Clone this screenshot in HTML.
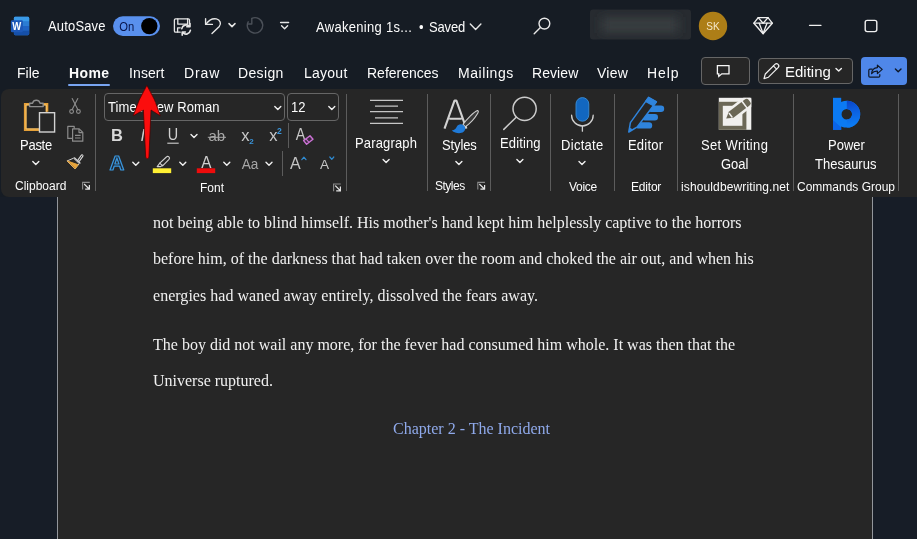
<!DOCTYPE html>
<html lang="en">
<head>
<meta charset="utf-8">
<title>Awakening 1st Draft - Word</title>
<style>
html,body{margin:0;padding:0;background:#161c24;}
body{width:917px;height:539px;overflow:hidden;position:relative;font-family:"Liberation Sans",sans-serif;color:#fff;}
#app{position:absolute;left:0;top:0;width:917px;height:539px;overflow:hidden;background:#161c24;}
.t{position:absolute;white-space:nowrap;line-height:1;color:#fcfcfc;will-change:transform;}
.ui13{font-size:13px;transform:scaleY(1.09);transform-origin:0 84.65%;}
.ui14{font-size:14px;transform:scaleY(1.09);transform-origin:0 84.65%;}
.ui12{font-size:12px;transform:scaleY(1.09);transform-origin:0 84.65%;}
#ribbon{position:absolute;left:1px;top:89px;width:930px;height:108px;background:#262626;border-radius:8px;}
#docbg{position:absolute;left:0;top:197px;width:917px;height:343px;background:#171d27;}
#page{position:absolute;left:57px;top:190px;width:814px;height:360px;background:#262626;border-left:1px solid #93969b;border-right:1px solid #93969b;}
.sep{position:absolute;width:1px;background:#5c5c5c;}
.doc{font-family:"Liberation Serif",serif;font-size:16px;color:#f0f0f0;}
.box{position:absolute;box-sizing:border-box;border:1px solid #666;border-radius:4px;background:#262626;}
svg{position:absolute;left:0;top:0;overflow:visible;}
</style>
</head>
<body>
<div id="app">

<!-- ===== document area ===== -->
<div id="docbg"></div>
<div id="page"></div>

<!-- ===== ribbon ===== -->
<div id="ribbon"></div>

<!-- ===== title bar text ===== -->
<div class="t ui13" style="left:48px;top:20px;letter-spacing:0.16px;">AutoSave</div>
<div class="t ui13" style="left:316px;top:21px;letter-spacing:0.3px;">Awakening 1s...</div>
<div class="t ui13" style="left:418.5px;top:21px;">•</div>
<div class="t ui13" style="left:429px;top:21px;letter-spacing:-0.15px;">Saved</div>

<!-- ===== tabs ===== -->
<div class="t ui14" style="left:17px;top:66px;">File</div>
<div class="t ui14" style="left:69px;top:66px;font-weight:bold;letter-spacing:0.375px;">Home</div>
<div class="t ui14" style="left:129px;top:66px;letter-spacing:0.1px;">Insert</div>
<div class="t ui14" style="left:184px;top:66px;letter-spacing:0.9px;">Draw</div>
<div class="t ui14" style="left:238px;top:66px;letter-spacing:0.35px;">Design</div>
<div class="t ui14" style="left:304px;top:66px;letter-spacing:0.25px;">Layout</div>
<div class="t ui14" style="left:367px;top:66px;">References</div>
<div class="t ui14" style="left:458px;top:66px;letter-spacing:0.56px;">Mailings</div>
<div class="t ui14" style="left:532px;top:66px;letter-spacing:0.07px;">Review</div>
<div class="t ui14" style="left:597px;top:66px;letter-spacing:0.25px;">View</div>
<div class="t ui14" style="left:647px;top:66px;letter-spacing:0.9px;">Help</div>
<div style="position:absolute;left:68px;top:84px;width:42px;height:2.3px;background:#78a5f2;border-radius:1.2px;"></div>

<!-- right-side buttons -->
<div class="box" style="left:701px;top:57px;width:49px;height:28px;"></div>
<div class="box" style="left:758px;top:58px;width:95px;height:26px;"></div>
<div style="position:absolute;left:861px;top:57px;width:46px;height:28px;background:#4f87e9;border-radius:4px;"></div>
<div class="t" style="left:784.5px;top:64px;font-size:15px;transform:scaleY(1.02);transform-origin:0 84.65%;">Editing</div>

<!-- ===== ribbon contents ===== -->
<div class="sep" style="left:95px;top:94px;height:97px;"></div>
<div class="sep" style="left:346px;top:94px;height:97px;"></div>
<div class="sep" style="left:427px;top:94px;height:97px;"></div>
<div class="sep" style="left:490px;top:94px;height:97px;"></div>
<div class="sep" style="left:550px;top:94px;height:97px;"></div>
<div class="sep" style="left:614px;top:94px;height:97px;"></div>
<div class="sep" style="left:677px;top:94px;height:97px;"></div>
<div class="sep" style="left:793px;top:94px;height:97px;"></div>
<div class="sep" style="left:898px;top:94px;height:97px;"></div>
<div class="sep" style="left:288px;top:123px;height:25px;"></div>
<div class="sep" style="left:282px;top:151px;height:25px;"></div>

<div class="t ui13" style="left:20px;top:139px;letter-spacing:-0.26px;">Paste</div>
<div class="t ui12" style="left:15px;top:180px;">Clipboard</div>

<div class="box" style="left:104px;top:93px;width:181px;height:28px;"></div>
<div class="box" style="left:287px;top:93px;width:52px;height:28px;"></div>
<div class="t ui13" style="left:108px;top:101px;letter-spacing:0.11px;">Times New Roman</div>
<div class="t ui13" style="left:291px;top:101px;">12</div>
<div class="t ui12" style="left:200px;top:182px;">Font</div>

<div class="t ui13" style="left:355px;top:137px;letter-spacing:0.15px;">Paragraph</div>
<div class="t ui13" style="left:442px;top:139px;letter-spacing:-0.13px;">Styles</div>
<div class="t ui12" style="left:435px;top:180px;letter-spacing:-0.5px;">Styles</div>
<div class="t ui13" style="left:500px;top:137px;letter-spacing:0.14px;">Editing</div>
<div class="t ui13" style="left:561px;top:139px;letter-spacing:0.3px;">Dictate</div>
<div class="t ui12" style="left:569px;top:181px;letter-spacing:-0.3px;">Voice</div>
<div class="t ui13" style="left:628px;top:139px;letter-spacing:0.2px;">Editor</div>
<div class="t ui12" style="left:631px;top:181px;letter-spacing:-0.2px;">Editor</div>
<div class="t ui13" style="left:701px;top:139px;letter-spacing:0.36px;">Set Writing</div>
<div class="t ui13" style="left:721px;top:158px;">Goal</div>
<div class="t ui12" style="left:681px;top:181px;letter-spacing:0.125px;">ishouldbewriting.net</div>
<div class="t ui13" style="left:828px;top:139px;">Power</div>
<div class="t ui13" style="left:815px;top:158px;">Thesaurus</div>
<div class="t ui12" style="left:797px;top:181px;">Commands Group</div>

<!-- ===== document text ===== -->
<div class="t doc" style="left:153px;top:215px;">not being able to blind himself. His mother's hand kept him helplessly captive to the horrors</div>
<div class="t doc" style="left:153px;top:251px;">before him, of the darkness that had taken over the room and choked the air out, and when his</div>
<div class="t doc" style="left:153px;top:288px;letter-spacing:0.03px;">energies had waned away entirely, dissolved the fears away.</div>
<div class="t doc" style="left:153px;top:337px;">The boy did not wail any more, for the fever had consumed him whole. It was then that the</div>
<div class="t doc" style="left:153px;top:373px;">Universe ruptured.</div>
<div class="t doc" style="left:393px;top:421px;color:#8fa9ea;">Chapter 2 - The Incident</div>

<!-- ===== icons ===== -->
<svg id="icons" width="917" height="539" viewBox="0 0 917 539">

<!-- Word logo -->
<g>
  <rect x="13.9" y="16.8" width="15.3" height="18.4" rx="1.4" fill="#2b7cd3"/>
  <path d="M13.9 18.2 a1.4 1.4 0 0 1 1.4 -1.4 h12.5 a1.4 1.4 0 0 1 1.4 1.4 v3.2 h-15.3z" fill="#3a9ae8"/>
  <rect x="13.9" y="21.4" width="15.3" height="4.6" fill="#2b7cd3"/>
  <rect x="13.9" y="26" width="15.3" height="4.6" fill="#1f63c4"/>
  <path d="M13.9 30.6 h15.3 v3.2 a1.4 1.4 0 0 1 -1.4 1.4 h-12.5 a1.4 1.4 0 0 1 -1.4 -1.4z" fill="#154fa8"/>
  <rect x="10.9" y="20.2" width="12" height="12" rx="1.3" fill="#1d58b8"/>
  <text x="16.8" y="30" font-family="Liberation Sans, sans-serif" font-size="11.4" font-weight="bold" fill="#fff" text-anchor="middle" textLength="9" lengthAdjust="spacingAndGlyphs">W</text>
</g>
<!-- AutoSave toggle -->
<rect x="113" y="16.3" width="47" height="19.6" rx="9.8" fill="#5990ee"/>
<circle cx="149.3" cy="26.1" r="8.2" fill="#000"/>
<text x="119.3" y="31" font-family="Liberation Sans, sans-serif" font-size="12.6" fill="#07144a" textLength="15" lengthAdjust="spacingAndGlyphs">On</text>
<!-- Save (sync) icon -->
<g fill="none" stroke="#e6e6e6" stroke-width="1.3" stroke-linecap="round" stroke-linejoin="round">
  <path d="M180.2 32.2 h-4.6 a1.2 1.2 0 0 1 -1.2 -1.2 v-11 a1.2 1.2 0 0 1 1.2 -1.2 h12.6 a1.3 1.3 0 0 1 1.3 1.3 v4"/>
  <path d="M177.8 19 v5.2 h9.8 v-5.2"/>
  <path d="M177.6 32 v-4.2 h2.6"/>
  <g stroke-width="1.6">
  <path d="M181.8 28.6 a4.4 4.4 0 0 1 7.6 -2.2 M190 23.6 v3.2 h-3.2"/>
  <path d="M190.4 30.4 a4.4 4.4 0 0 1 -7.6 2.2 M182.2 35.2 v-3.2 h3.2"/>
  </g>
</g>
<!-- Undo -->
<g fill="none" stroke="#e6e6e6" stroke-width="1.4" stroke-linecap="round" stroke-linejoin="round">
  <path d="M205.6 18.8 v5.6 h6.8"/>
  <path d="M206 24.2 C 208.6 20.4, 212.6 18.2, 216.4 18.9 C 220.2 19.7, 221.6 23.8, 219.3 26.4 L 212 33.6"/>
  <path d="M229 23.6 l3 3 l3 -3" stroke-width="1.5"/>
</g>
<!-- Redo (disabled) -->
<g fill="none" stroke="#4b5058" stroke-width="1.4" stroke-linecap="round" stroke-linejoin="round">
  <path d="M251.8 18.4 a7.7 7.7 0 1 1 -3.6 3.4"/>
  <path d="M251.8 18.6 v5.4 h-3.6"/>
</g>
<!-- Customize QAT -->
<g fill="none" stroke="#e6e6e6" stroke-width="1.4" stroke-linecap="round" stroke-linejoin="round">
  <path d="M280.6 22.5 h8"/>
  <path d="M281.6 25.8 l3 3 l3 -3"/>
</g>
<!-- Saved chevron -->
<path d="M470.3 24 l5.3 5.6 l5.3 -5.6" fill="none" stroke="#e6e6e6" stroke-width="1.4" stroke-linecap="round" stroke-linejoin="round"/>
<!-- Search -->
<g fill="none" stroke="#e6e6e6" stroke-width="1.4" stroke-linecap="round">
  <circle cx="544.4" cy="23.6" r="5.4"/>
  <path d="M540.4 27.6 l-6.2 6.2"/>
</g>
<!-- blurred account name -->
<defs>
  <filter id="blurf" x="-40%" y="-150%" width="180%" height="400%"><feGaussianBlur stdDeviation="5 4"/></filter>
  <clipPath id="blurclip"><rect x="590" y="9.5" width="101" height="30" rx="3"/></clipPath>
</defs>
<rect x="590" y="9.5" width="101" height="30" rx="3" fill="#272b30"/>
<g clip-path="url(#blurclip)"><rect x="602" y="17" width="76" height="16" fill="#383c41" filter="url(#blurf)"/></g>
<!-- Avatar -->
<circle cx="713" cy="26" r="14.2" fill="#ad7e17"/>
<text x="713" y="30" font-family="Liberation Sans, sans-serif" font-size="11.5" fill="#f4e6c8" text-anchor="middle" textLength="13.4" lengthAdjust="spacingAndGlyphs">SK</text>
<!-- Diamond -->
<g fill="none" stroke="#f0f0f0" stroke-width="1.3" stroke-linejoin="round" stroke-linecap="round">
  <path d="M758.2 17.6 h9.8 l4.3 5.6 l-9.2 10.6 l-9.2 -10.6z"/>
  <path d="M753.9 23.2 h18.4"/>
  <path d="M758.2 17.6 l4.9 5.6 l4.9 -5.6"/>
  <path d="M759.2 23.2 l3.9 10.4 l3.9 -10.4"/>
</g>
<!-- Window buttons -->
<path d="M809.5 25.3 h11.5" stroke="#f0f0f0" stroke-width="1.3" stroke-linecap="round" fill="none"/>
<rect x="865.2" y="20.4" width="11.6" height="11.2" rx="2" fill="none" stroke="#f0f0f0" stroke-width="1.4"/>

<!-- Comment icon -->
<path d="M717.4 65.6 h11.6 v8.2 h-7.2 l-3 2.6 v-2.6 h-1.4z" fill="none" stroke="#f6f6f6" stroke-width="1.3" stroke-linejoin="miter"/>
<!-- Editing pencil -->
<g fill="none" stroke="#f0f0f0" stroke-width="1.2" stroke-linejoin="round" stroke-linecap="round">
  <path d="M764 78.6 l1.3 -4.6 l9.6 -9.6 a2.2 2.2 0 0 1 3.2 3.2 l-9.6 9.6z"/>
  <path d="M773.4 65.9 l3.2 3.2"/>
</g>
<path d="M836 68.4 l2.7 2.7 l2.7 -2.7" fill="none" stroke="#f0f0f0" stroke-width="1.4" stroke-linecap="round" stroke-linejoin="round"/>
<!-- Share icon -->
<g fill="none" stroke="#0e1726" stroke-width="1.2" stroke-linejoin="round" stroke-linecap="round">
  <path d="M872.2 69.2 h-2.2 a1.2 1.2 0 0 0 -1.2 1.2 v5.6 a1.2 1.2 0 0 0 1.2 1.2 h8.6 a1.2 1.2 0 0 0 1.2 -1.2 v-1.4"/>
  <path d="M877.4 65.2 l4.8 4.2 l-4.8 4.2 v-2.5 c-2.6 -0.2 -4.4 0.6 -5.8 2.6 c0.2 -3.6 2.2 -5.8 5.8 -6.1z"/>
</g>
<path d="M895.4 68.9 l2.8 2.8 l2.8 -2.8" fill="none" stroke="#0e1726" stroke-width="1.4" stroke-linecap="round" stroke-linejoin="round"/>

<!-- Paste icon -->
<g fill="none" stroke-linejoin="miter">
  <path d="M29.4 104.2 h-4.2 v25.5 h14" stroke="#e5a038" stroke-width="2.6"/>
  <path d="M43.4 104.2 h3.6 v7.6" stroke="#e5a038" stroke-width="2.6"/>
  <path d="M29.4 104.9 h-3.4 v24 h13.2" stroke="#f7c873" stroke-width="0.9"/>
  <path d="M43.4 104.9 h2.9 v6.9" stroke="#f7c873" stroke-width="0.9"/>
  <path d="M29.6 106.6 v-3.4 h3 a3.8 3.8 0 0 1 7.4 0 h3.2 v3.4z" stroke="#8e8e8e" stroke-width="1.4" stroke-linejoin="round"/>
  <rect x="39.5" y="112.7" width="15.1" height="19.3" fill="#262626" stroke="#d2d2d2" stroke-width="1.4"/>
</g>
<path d="M32.8 161.6 l3 3 l3 -3" fill="none" stroke="#f0f0f0" stroke-width="1.4" stroke-linecap="round" stroke-linejoin="round"/>
<!-- Cut -->
<g fill="none" stroke="#8c8c8c" stroke-width="1.1" stroke-linecap="round">
  <path d="M72.2 98.6 l5.6 11"/>
  <path d="M77.8 98.6 l-5.6 11"/>
  <circle cx="71.6" cy="111.5" r="1.9"/>
  <circle cx="78.4" cy="111.5" r="1.9"/>
</g>
<!-- Copy -->
<g fill="none" stroke="#8c8c8c" stroke-width="1.2" stroke-linejoin="round">
  <path d="M72.4 138.4 h-4.6 v-12 h6.4 v2"/>
  <path d="M72.6 128.8 h6.6 l3.6 3.6 v8.8 h-10.2z"/>
  <path d="M79 129 v3.6 h3.6"/>
  <path d="M75 135.4 h5.6 M75 138 h5.6"/>
</g>
<!-- Format painter -->
<g stroke-linejoin="round" stroke-linecap="round">
  <path d="M67.4 160.8 l6.2 -2.6 l5.6 5.4 l-4 5z" fill="#262626" stroke="#d4d4d4" stroke-width="1"/>
  <path d="M67.6 161 l10.6 3.8 l-3 3.8z" fill="#e9a63c" stroke="#e9a63c" stroke-width="0.9"/>
  <path d="M78.8 160.4 l3.2 -4.6" fill="none" stroke="#d4d4d4" stroke-width="3"/>
  <path d="M78.8 160.4 l3.2 -4.6" fill="none" stroke="#262626" stroke-width="0.9"/>
  <path d="M74.4 157.8 l5.6 5.2" fill="none" stroke="#d4d4d4" stroke-width="1.2"/>
</g>
<!-- dialog launchers -->
<g fill="none" stroke="#8c8c8c" stroke-width="1.1" stroke-linecap="square">
  <path d="M82.6 189 v-6.6 h6.6"/>
  <path d="M333.6 190.6 v-6.6 h6.6"/>
  <path d="M477.8 189 v-6.6 h6.6"/>
</g>
<g fill="none" stroke="#e4e4e4" stroke-width="1.2" stroke-linecap="square">
  <path d="M84.6 184.4 l4.6 4.6 M89.4 185.6 v3.6 h-3.6"/>
  <path d="M335.6 186 l4.6 4.6 M340.4 187.2 v3.6 h-3.6"/>
  <path d="M479.8 184.4 l4.6 4.6 M484.6 185.6 v3.6 h-3.6"/>
</g>

<!-- Font group: chevrons in combo boxes -->
<g fill="none" stroke="#f0f0f0" stroke-width="1.4" stroke-linecap="round" stroke-linejoin="round">
  <path d="M274.8 106.4 l3 3 l3 -3"/>
  <path d="M328.8 106.4 l3 3 l3 -3"/>
  <path d="M191 134.4 l3 3 l3 -3"/>
  <path d="M132.8 162.2 l3 3 l3 -3"/>
  <path d="M179.8 162.2 l3 3 l3 -3"/>
  <path d="M223.8 162.2 l3 3 l3 -3"/>
  <path d="M266 162.2 l3 3 l3 -3"/>
</g>
<g font-family="Liberation Sans, sans-serif">
  <text x="111" y="141.2" font-size="16.5" font-weight="bold" fill="#d8d8d8">B</text>
  <text x="140.5" y="141" font-size="16" font-style="italic" fill="#d0d0d0">I</text>
  <text x="167.8" y="140.3" font-size="16.6" fill="#d0d0d0" textLength="10.4" lengthAdjust="spacingAndGlyphs">U</text>
  <path d="M167.3 143.2 h11.4" stroke="#d0d0d0" stroke-width="1.1"/>
  <text x="208.6" y="141.2" font-size="15" fill="#a8a8a8" letter-spacing="-0.3">ab</text>
  <path d="M207.8 137.3 h18.2" stroke="#a8a8a8" stroke-width="1"/>
  <text x="241.2" y="141" font-size="16.5" fill="#c8c8c8">x</text>
  <text x="249.2" y="144" font-size="8" font-weight="bold" fill="#3a96dd">2</text>
  <text x="269.2" y="141" font-size="16.5" fill="#c8c8c8">x</text>
  <text x="277" y="134.2" font-size="8.6" font-weight="bold" fill="#3a96dd">2</text>
  <text x="295.8" y="140.3" font-size="16.4" fill="#c8c8c8" textLength="9.6" lengthAdjust="spacingAndGlyphs">A</text>
  <text x="241.8" y="168.5" font-size="14" fill="#a6a6a6" textLength="16.6" lengthAdjust="spacingAndGlyphs">Aa</text>
  <text x="290" y="169" font-size="16" fill="#c4c4c4">A</text>
  <text x="320" y="169.3" font-size="13.6" fill="#c4c4c4">A</text>
  <text x="201.2" y="167.8" font-size="16.4" fill="#d0d0d0" textLength="10.2" lengthAdjust="spacingAndGlyphs">A</text>
</g>
<!-- clear formatting eraser -->
<path d="M303.6 140.6 L310 135.7 L313 139.2 L306.6 144.3z" fill="#3a2a3e" stroke="#cb72d4" stroke-width="1.4" stroke-linejoin="round"/>
<path d="M306 138.8 l3 3.6" stroke="#cb72d4" stroke-width="1.1"/>
<!-- grow / shrink carets -->
<path d="M301.8 159.7 l2.1 -2.6 l2.1 2.6" fill="none" stroke="#2f8ad0" stroke-width="1.2" stroke-linecap="round" stroke-linejoin="round"/>
<path d="M329.8 157 l2 2.4 l2 -2.4" fill="none" stroke="#2f8ad0" stroke-width="1.2" stroke-linecap="round" stroke-linejoin="round"/>
<!-- Text effects A -->
<text x="109.6" y="170.4" font-family="Liberation Sans, sans-serif" font-size="20" font-weight="bold" fill="#1d2a38" stroke="#3a96dd" stroke-width="1.2" stroke-linejoin="round" textLength="14.8" lengthAdjust="spacingAndGlyphs">A</text>
<!-- Highlighter -->
<rect x="152.8" y="168.3" width="18.4" height="4.8" fill="#fff033"/>
<g fill="none" stroke="#d0d0d0" stroke-width="1.1" stroke-linejoin="round" stroke-linecap="round">
  <path d="M159.8 163.2 l6.6 -6.2 a1.6 1.6 0 0 1 2.6 2.4 l-6.4 6.4z"/>
  <path d="M159.8 163.2 l-2.6 3.4 h3.4 l2 -1.4"/>
</g>
<!-- Font color bar -->
<rect x="196.8" y="168.3" width="18.4" height="4.8" fill="#ee0c0c"/>

<!-- red annotation arrow -->
<path d="M146.9 85.4 Q 155.6 99.4, 160.3 115.8 L151 110 L148.9 157.4 Q147.3 160 145.7 157.4 L143.4 110 L133.2 115.8 Q 138.4 99.4, 146.9 85.4 Z" fill="#fb0d0d" stroke="#4a0000" stroke-width="0.7" stroke-linejoin="round"/>
<!-- Paragraph icon -->
<g stroke="#c6c6c6" stroke-width="1.2">
  <path d="M370 100.4 h33 M375 106.1 h23 M370 111.6 h33 M375 117.8 h23 M370 123.4 h33"/>
</g>
<g fill="none" stroke="#f0f0f0" stroke-width="1.4" stroke-linecap="round" stroke-linejoin="round">
  <path d="M383.1 159.6 l3 3 l3 -3"/>
  <path d="M455.9 161.6 l3 3 l3 -3"/>
  <path d="M516.9 159.4 l3 3 l3 -3"/>
  <path d="M579 161.6 l3 3 l3 -3"/>
</g>
<!-- Styles icon -->
<path d="M444.5 128.6 L454.5 100.6 h1.9 L466.4 128.6 M449.3 118.8 h12.4" fill="none" stroke="#d2d2d2" stroke-width="2.1" stroke-linejoin="bevel"/>
<path d="M463 124.4 C 466.6 119.6, 473.8 112, 477.4 110.6 C 478.8 110.4, 478.4 112.2, 477.6 113.6 C 475 118, 469.4 124, 465.4 126.8 z" fill="#3a3a3a" stroke="#cfcfcf" stroke-width="1.1" stroke-linejoin="round"/>
<path d="M451.8 130.4 c2.8 -0.2 4 -1.6 4.8 -3.4 c1.2 -2.6 4.4 -3.6 6.8 -1.8 c2.4 1.8 2.4 4.8 0.2 6.6 c-3.2 2.4 -8.4 1.6 -11.8 -1.4z" fill="#1f7ad8"/>
<!-- Editing (search) icon -->
<g fill="none" stroke="#cccccc" stroke-width="1.5" stroke-linecap="round">
  <circle cx="524.6" cy="108.8" r="11.6"/>
  <path d="M516.2 117.2 l-12.4 12.2"/>
</g>
<!-- Dictate icon -->
<rect x="576" y="97.6" width="12.8" height="23.6" rx="6.4" fill="#1267c0" stroke="#3b8dd6" stroke-width="0.9"/>
<g fill="none" stroke="#d0d0d0" stroke-width="1.3" stroke-linecap="round">
  <path d="M571.6 115.2 a10.8 10.8 0 0 0 21.6 0"/>
  <path d="M582.4 126 v5.2"/>
</g>
<!-- Editor icon -->
<g>
  <g stroke="#2f84dc" stroke-width="6.4" stroke-linecap="round">
    <path d="M651 108.7 h10"/>
    <path d="M645 117.2 h9.8"/>
    <path d="M639 125.4 h10"/>
  </g>
  <path d="M648.6 97.4 L656.4 101.8 L637.4 126.8 L628.8 132 L630.4 122.6z" fill="#262626" stroke="#2f84dc" stroke-width="1.5" stroke-linejoin="round"/>
  <path d="M648.6 97.4 L656.4 101.8 L653.4 105.8 L645.6 101.4z" fill="#2f84dc" stroke="#2f84dc" stroke-width="1.2" stroke-linejoin="round"/>
  <path d="M628.8 132 l0.8 -4.4 l3.4 2z" fill="#2f84dc"/>
</g>
<!-- Set Writing Goal icon -->
<clipPath id="swgclip"><rect x="718.8" y="97.8" width="32.5" height="32"/></clipPath>
<rect x="718.8" y="97.8" width="32.5" height="32" fill="#f1f0ee"/>
<rect x="720.8" y="103.8" width="23.6" height="24" fill="none" stroke="#6b6756" stroke-width="4"/>
<g clip-path="url(#swgclip)">
<g transform="translate(726.2,118.6) rotate(-37.5)">
  <rect x="4" y="-6.4" width="28" height="12.8" fill="#f1f0ee"/>
  <path d="M0 0 L6.2 -3.8 H22.2 V3.8 H6.2 Z" fill="#6b6756"/>
  <path d="M23.8 -3.8 H26.8 a2.4 2.4 0 0 1 2.4 2.4 V1.4 a2.4 2.4 0 0 1 -2.4 2.4 H23.8 Z" fill="#6b6756"/>
  <path d="M5.6 -2.2 V2.2" stroke="#f1f0ee" stroke-width="1.5" stroke-linecap="round"/>
</g>
</g>
<!-- Power Thesaurus icon -->
<defs>
  <linearGradient id="ptg" gradientUnits="userSpaceOnUse" x1="852" y1="100" x2="856" y2="124">
    <stop offset="0" stop-color="#0b45c6"/><stop offset="0.45" stop-color="#0b5fe0"/><stop offset="1" stop-color="#0b7af3"/>
  </linearGradient>
</defs>
<g>
  <rect x="833" y="97.8" width="8.2" height="32" fill="#0b7af3"/>
  <path d="M833 120 L841.2 127.4 V129.8 H833z" fill="#0a64e8"/>
  <circle cx="846.8" cy="114.2" r="9.35" fill="none" stroke="#0b7af3" stroke-width="8.1"/>
  <path d="M846.8 104.85 a9.35 9.35 0 0 1 0 18.7" fill="none" stroke="url(#ptg)" stroke-width="8.1"/>
</g>
</svg>

</div>
</body>
</html>
